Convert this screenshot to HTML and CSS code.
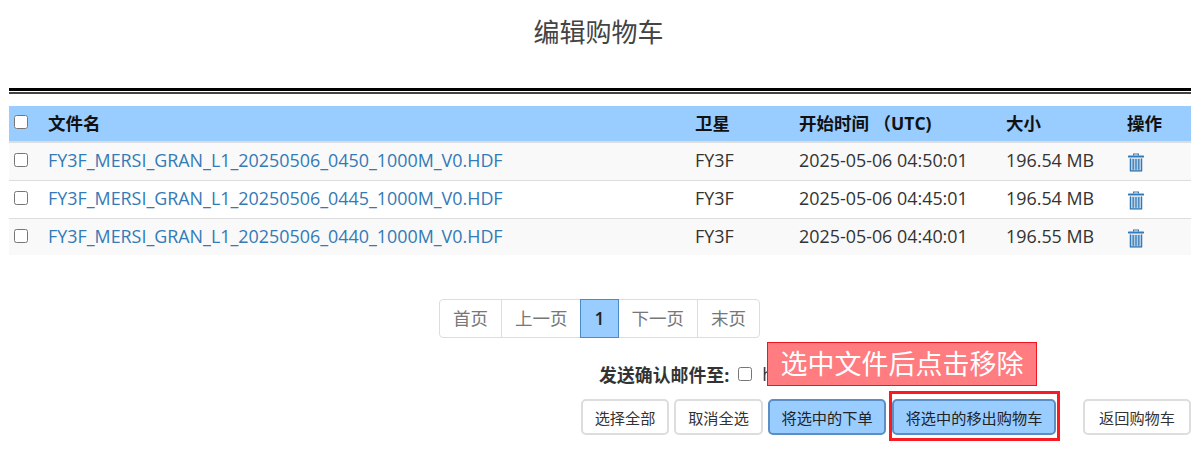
FILE: index.html
```html
<!DOCTYPE html>
<html lang="zh">
<head>
<meta charset="utf-8">
<title>编辑购物车</title>
<link rel="stylesheet" href="styles.css">
</head>
<body>
<svg class="defs" width="0" height="0" aria-hidden="true">
  <symbol id="trash" viewBox="0 0 16 19">
    <path d="M5.6 2.4 V1 H10.4 V2.4" fill="none" stroke="currentColor" stroke-width="1.2"/>
    <rect x="0" y="2.4" width="16" height="2.2" rx="0.6" fill="currentColor"/>
    <path d="M1.8 5.4 H14.2 V17.2 Q14.2 18.6 12.8 18.6 H3.2 Q1.8 18.6 1.8 17.2 Z" fill="currentColor" opacity="0.35"/>
    <path d="M2.4 5.4 V17.8 H13.6 V5.4 M5.2 6 V16.8 M8 6 V16.8 M10.8 6 V16.8" fill="none" stroke="currentColor" stroke-width="1.2"/>
  </symbol>
</svg>
<main class="page">
  <h1 class="title">编辑购物车</h1>
  <div class="rule"></div>
  <table class="files">
    <thead>
      <tr>
        <th class="c-check"><input type="checkbox"></th>
        <th class="c-name">文件名</th>
        <th class="c-sat">卫星</th>
        <th class="c-time">开始时间 （UTC)</th>
        <th class="c-size">大小</th>
        <th class="c-op">操作</th>
      </tr>
    </thead>
    <tbody>
      <tr>
        <td><input type="checkbox"></td>
        <td><a href="#">FY3F_MERSI_GRAN_L1_20250506_0450_1000M_V0.HDF</a></td>
        <td>FY3F</td>
        <td>2025-05-06 04:50:01</td>
        <td>196.54 MB</td>
        <td><svg class="trash"><use href="#trash"/></svg></td>
      </tr>
      <tr>
        <td><input type="checkbox"></td>
        <td><a href="#">FY3F_MERSI_GRAN_L1_20250506_0445_1000M_V0.HDF</a></td>
        <td>FY3F</td>
        <td>2025-05-06 04:45:01</td>
        <td>196.54 MB</td>
        <td><svg class="trash"><use href="#trash"/></svg></td>
      </tr>
      <tr>
        <td><input type="checkbox"></td>
        <td><a href="#">FY3F_MERSI_GRAN_L1_20250506_0440_1000M_V0.HDF</a></td>
        <td>FY3F</td>
        <td>2025-05-06 04:40:01</td>
        <td>196.55 MB</td>
        <td><svg class="trash"><use href="#trash"/></svg></td>
      </tr>
    </tbody>
  </table>
  <nav class="pager">
    <a href="#">首页</a>
    <a href="#">上一页</a>
    <a href="#" class="current">1</a>
    <a href="#">下一页</a>
    <a href="#">末页</a>
  </nav>
  <div class="mail">
    <strong>发送确认邮件至:</strong>
    <input type="checkbox">
    <span class="mail-addr">h</span>
  </div>
  <div class="actions">
    <button class="btn b-select">选择全部</button>
    <button class="btn b-clear">取消全选</button>
    <button class="btn primary b-order">将选中的下单</button>
    <button class="btn primary b-remove">将选中的移出购物车</button>
    <button class="btn b-back">返回购物车</button>
  </div>
  <div class="note">选中文件后点击移除</div>
</main>
</body>
</html>
```

FILE: styles.css
```css
* { box-sizing: border-box; }
html, body { margin: 0; padding: 0; background: #fff; }
body {
  font-family: "Open Sans", "Noto Sans CJK SC", sans-serif;
  font-size: 17.9px;
  color: #333;
  overflow: hidden;
}
.defs { position: absolute; }
.page { position: relative; width: 1200px; height: 473px; padding: 0 9px; }
.title {
  margin: 0;
  padding: 15px 3px 0 0;
  height: 88px;
  text-align: center;
  font-size: 26px;
  line-height: 34px;
  font-weight: 400;
  color: #444;
}
.rule {
  height: 6px;
  border-top: 3px solid #000;
  border-bottom: 2px solid #444;
  margin-bottom: 12px;
}
.files { width: 100%; border-collapse: collapse; table-layout: fixed; }
.files th {
  height: 36px;
  padding: 0 0 3px;
  text-align: left;
  font-size: 17.5px;
  font-weight: 700;
  color: #111;
  background: #9cf;
  white-space: nowrap;
}
.files td {
  height: 38px;
  padding: 0 0 2px;
  border-top: 1px solid #ddd;
  font-size: 17.9px;
  vertical-align: middle;
  white-space: nowrap;
}
.files tbody tr:first-child td { border-top: 2px solid #ddd; }
.files tbody tr:nth-child(odd) td { background: #f9f9f9; }
.files tbody tr:last-child td { height: 37px; }
.files input { display: block; margin: 0 0 0 5px; width: 14px; height: 14px; }
.c-check { width: 39px; }
.c-name { width: 647px; }
.c-sat { width: 104px; }
.c-time { width: 207px; }
.c-size { width: 121px; }
.files a { color: #337ab7; text-decoration: none; }
.trash { display: block; width: 16px; height: 19px; margin: 5px 0 0 1px; color: #337ab7; }
.pager {
  display: flex;
  justify-content: center;
  margin-top: 44px;
}
.pager a {
  display: block;
  height: 39px;
  padding: 0 13px;
  margin-left: -1px;
  line-height: 37px;
  font-size: 17.5px;
  border: 1px solid #ddd;
  color: #777;
  text-decoration: none;
  background: #fff;
}
.pager a:first-child { border-radius: 4px 0 0 4px; }
.pager a:last-child { border-radius: 0 4px 4px 0; }
.pager a.current {
  position: relative;
  background: #9cf;
  border-color: #4a8ac8;
  color: #222;
  font-weight: 600;
}
.mail {
  display: flex;
  align-items: center;
  height: 24px;
  margin-top: 24px;
  padding-left: 590px;
  white-space: nowrap;
}
.mail strong { font-weight: 700; }
.mail input { width: 14px; height: 14px; margin: 0 10px 0 9px; }
.actions {
  display: flex;
  margin-top: 13px;
  padding-left: 572px;
}
.btn {
  height: 36px;
  padding: 0;
  font: 15.2px "Open Sans", "Noto Sans CJK SC", sans-serif;
  color: #333;
  background: #fff;
  border: 2px solid #ddd;
  border-radius: 5px;
  white-space: nowrap;
}
.btn.primary { background: #9cf; border-color: #5b8fc4; color: #222; }
.b-select { width: 88px; }
.b-clear { width: 89px; margin-left: 5px; }
.b-order { width: 118px; margin-left: 5px; }
.b-remove { width: 164px; margin-left: 6px; position: relative; }
.b-remove::after {
  content: "";
  position: absolute;
  inset: -10px -6px -8px -5px;
  border: 3px solid #f91b23;
}
.b-back { width: 108px; margin-left: 27px; }
.note {
  position: absolute;
  left: 767px;
  top: 342px;
  width: 270px;
  height: 44px;
  background: #ff7c80;
  border: 1px solid #f0161e;
  color: #fff;
  font-size: 27px;
  line-height: 42px;
  text-align: center;
}
```
